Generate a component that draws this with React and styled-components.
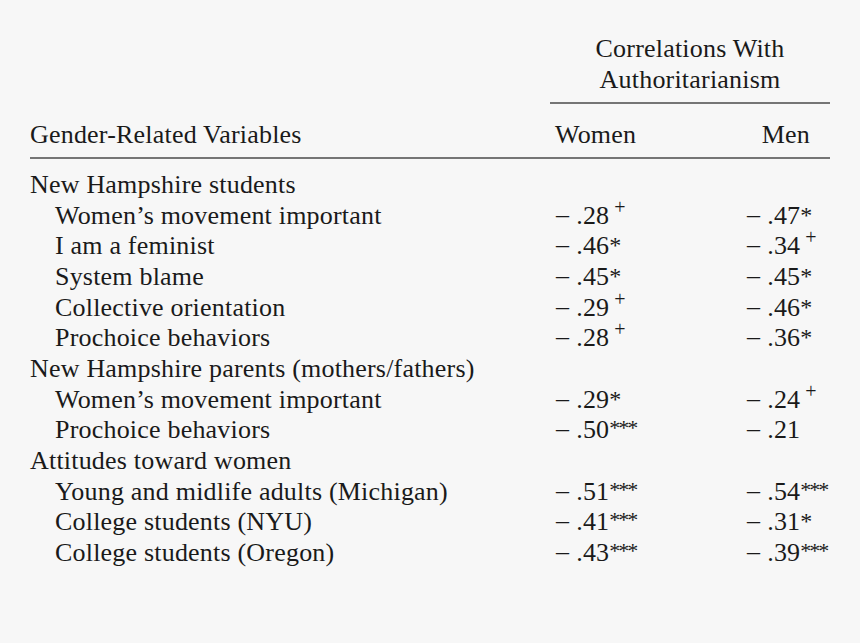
import React from "react";
import styled, { createGlobalStyle } from "styled-components";

const Global = createGlobalStyle`
  html, body { margin: 0; padding: 0; background: #f7f7f7; }
  body { font-family: "Liberation Serif", "Times New Roman", serif; color: #1a1a1a; }
`;

const Page = styled.div`
  width: 860px;
  height: 643px;
  background: #f7f7f7;
  box-sizing: border-box;
  padding: 34px 0 0 30px;
  overflow: hidden;
`;

const Table = styled.div`
  width: 800px;
  display: grid;
  grid-template-columns: 520px 192px 88px;
  font-size: 26px;
  line-height: 30.67px;
  letter-spacing: 0.2px;
`;

const SpanHead = styled.div`
  grid-column: 2 / 4;
  text-align: center;
`;

const Rule = styled.div`
  grid-column: ${(p) => p.$col};
  height: 2px;
  background: #757575;
  margin: ${(p) => p.$margin};
`;

const ColHead = styled.div`
  text-align: ${(p) => p.$align || "left"};
  padding-left: ${(p) => p.$pl || "0"};
  padding-right: ${(p) => p.$pr || "0"};
`;

const Label = styled.div`
  padding-left: ${(p) => (p.$indent ? "25px" : "0")};
  white-space: nowrap;
`;

const Value = styled.div`
  white-space: nowrap;
  padding-left: ${(p) => p.$pl || "0"};
`;

const Minus = styled.span`
  display: inline-block;
  margin-right: 7px;
  position: relative;
  top: -1px;
`;

const Plus = styled.span`
  font-size: 20px;
  position: relative;
  top: -10px;
  margin-left: 5px;
  line-height: 0;
`;

const Star = styled.span`
  font-size: ${(p) => (p.$n > 1 ? "22px" : "24px")};
  letter-spacing: ${(p) => (p.$n > 1 ? "-2px" : "0")};
  position: relative;
  top: ${(p) => (p.$n > 1 ? "-3px" : "-1px")};
  line-height: 0;
`;

const rows = [
  { label: "New Hampshire students" },
  { label: "Women’s movement important", indent: true, w: [".28", "+"], m: [".47", "*"] },
  { label: "I am a feminist", indent: true, w: [".46", "*"], m: [".34", "+"] },
  { label: "System blame", indent: true, w: [".45", "*"], m: [".45", "*"] },
  { label: "Collective orientation", indent: true, w: [".29", "+"], m: [".46", "*"] },
  { label: "Prochoice behaviors", indent: true, w: [".28", "+"], m: [".36", "*"] },
  { label: "New Hampshire parents (mothers/fathers)" },
  { label: "Women’s movement important", indent: true, w: [".29", "*"], m: [".24", "+"] },
  { label: "Prochoice behaviors", indent: true, w: [".50", "***"], m: [".21", ""] },
  { label: "Attitudes toward women" },
  { label: "Young and midlife adults (Michigan)", indent: true, w: [".51", "***"], m: [".54", "***"] },
  { label: "College students (NYU)", indent: true, w: [".41", "***"], m: [".31", "*"] },
  { label: "College students (Oregon)", indent: true, w: [".43", "***"], m: [".39", "***"] },
];

function Num({ v, pl }) {
  if (!v) return <Value $pl={pl} />;
  const [n, mark] = v;
  return (
    <Value $pl={pl}>
      <Minus>–</Minus>
      {n}
      {mark === "+" && <Plus>+</Plus>}
      {mark && mark !== "+" && <Star $n={mark.length}>{mark}</Star>}
    </Value>
  );
}

export default function App() {
  return (
    <Page>
      <Global />
      <Table>
        <SpanHead>
          Correlations With
          <br />
          Authoritarianism
        </SpanHead>
        <Rule $col="2 / 4" $margin="7px 0 16px 0" />
        <ColHead>Gender-Related Variables</ColHead>
        <ColHead $pl="5px">Women</ColHead>
        <ColHead $align="right" $pr="20px">Men</ColHead>
        <Rule $col="1 / 4" $margin="6px 0 11px 0" />
        {rows.map((r, i) => (
          <React.Fragment key={i}>
            <Label $indent={r.indent}>{r.label}</Label>
            <Num v={r.w} pl="6px" />
            <Num v={r.m} pl="5px" />
          </React.Fragment>
        ))}
      </Table>
    </Page>
  );
}
